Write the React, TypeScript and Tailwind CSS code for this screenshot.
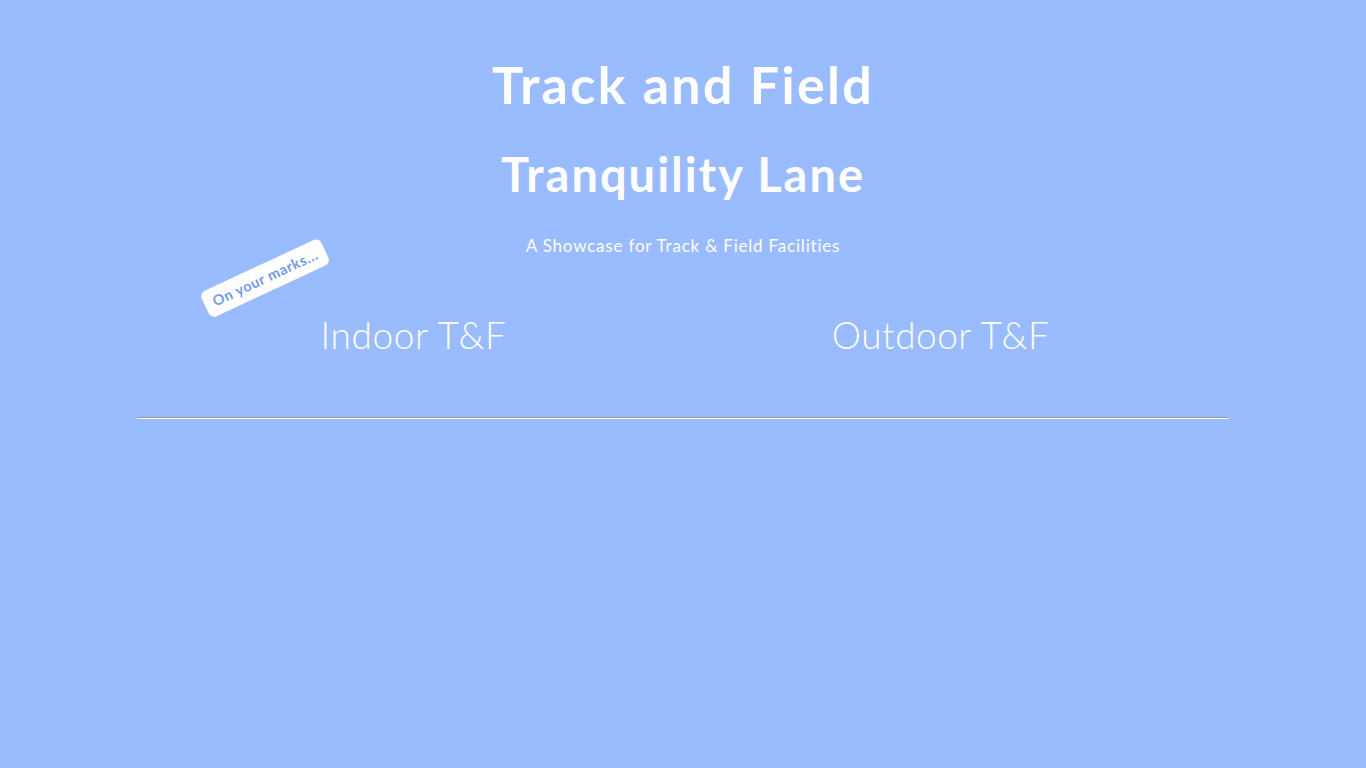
import React from "react";

const font = { fontFamily: "Lato, 'Noto Sans', sans-serif" };

export default function App() {
    return (
        <div className="min-h-[768px] bg-[#99bbff] text-white" style={font}>
            <header className="pt-[52px] text-center">
                <h1 className="text-[52px] leading-[64px] font-bold tracking-[2.3px]">Track and Field</h1>
                <h2 className="mt-[30px] text-[47px] leading-[56px] font-bold tracking-[2px]">Tranquility Lane</h2>
                <p className="mt-[32px] text-[17px] leading-[24px] tracking-[0.8px]">A Showcase for Track &amp; Field Facilities</p>
            </header>

            <div className="relative">
                {/* badge */}
                <div className="absolute left-[199px] top-[6px] -rotate-[25deg] rounded-[6px] bg-white px-[9px] py-[3px] text-[14.5px] font-bold text-[#6f9cf2] tracking-[0.6px]">
                    On your marks...
                </div>

                <div className="ml-[150px] grid w-[1054px] grid-cols-2 pt-[53px] text-center">
                    <h3 className="text-[37px] font-light leading-[48px] tracking-[0.6px]">Indoor T&amp;F</h3>
                    <h3 className="text-[37px] font-light leading-[48px] tracking-[0.5px]">Outdoor T&amp;F</h3>
                </div>
            </div>

            <hr className="mx-auto mt-[58px] w-[1092px] border-t border-b border-t-[#9a9a9a] border-b-white" />
        </div>
    );
}
